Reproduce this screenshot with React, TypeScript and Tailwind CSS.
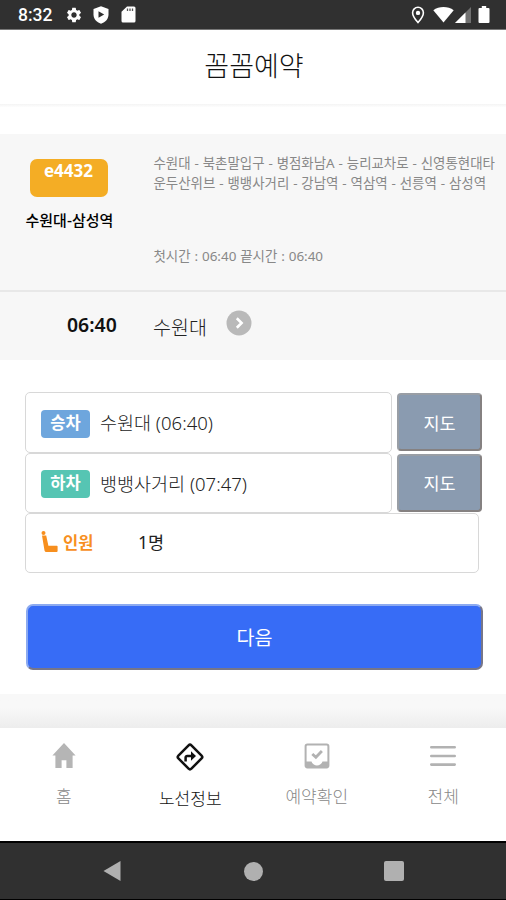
import type { ReactNode } from 'react'
import clsx from 'clsx'
import { MdSettings } from 'react-icons/md'

const stops = [
  { label: '승차', name: '수원대 (06:40)', color: 'bg-[#6ea6dd]' },
  { label: '하차', name: '뱅뱅사거리 (07:47)', color: 'bg-[#56c5b3]' },
]

const tabs = [
  { label: '홈', icon: <HomeIcon />, active: false },
  { label: '노선정보', icon: <RouteIcon />, active: true },
  { label: '예약확인', icon: <InboxIcon />, active: false },
  { label: '전체', icon: <MenuIcon />, active: false },
]

function HomeIcon() {
  return (
    <svg width="24" height="25" viewBox="0 0 24 24" preserveAspectRatio="none" fill="#b5b5b5">
      <path d="M12 0 23.6 12h-3V24h-6.200v-7.500H9.600V24H3.400V12H.4z" />
    </svg>
  )
}

function RouteIcon() {
  return (
    <svg width="30" height="30" viewBox="0 0 30 30" fill="none" stroke="#111" strokeWidth="2.5">
      <rect x="5.8" y="5.8" width="18.4" height="18.4" rx="2" transform="rotate(45 15 15)" />
      <path d="M10.600 19.500v-4a1.600 1.600 0 0 1 1.600-1.600h4.500" />
      <path d="M16 9.200 21 14l-5 4.800z" fill="#111" stroke="none" />
    </svg>
  )
}

function InboxIcon() {
  return (
    <svg width="26" height="26" viewBox="0 0 26 26" fill="none" stroke="#b2b2b2" strokeWidth="2">
      <rect x="1.600" y="1.600" width="22.800" height="22.800" rx="1.800" />
      <path d="M2 18.500h5.500c1 2.600 3 4 5.500 4s4.500-1.400 5.500-4H24V24H2z" fill="#b2b2b2" stroke="none" />
      <path d="m8.300 10.900 3.600 3.400 6-6.300" strokeWidth="2.800" />
    </svg>
  )
}

function MenuIcon() {
  return (
    <svg width="26" height="22" viewBox="0 0 26 22" stroke="#b2b2b2" strokeWidth="2.600" strokeLinecap="round">
      <path d="M1.300 2.300h23.400M1.300 11h23.400M1.300 19.600h23.400" />
    </svg>
  )
}

function StatusBar() {
  return (
    <div className="flex h-[30px] items-center justify-between border-b border-[#777] bg-[#303030] pr-[15px] pl-[18px] text-white">
      <div className="flex items-center">
        <span className="w-[47px] pt-[2px] text-[17.500px] leading-none font-medium">8:32</span>
        <MdSettings className="h-[18px] w-[18px]" />
        <svg className="ml-[10px]" width="16" height="18" viewBox="0 0 16 18">
          <path d="M8 .3 15.500 3v5.500c0 4.300-3 7.800-7.500 9.200C3.500 16.300.5 12.800.5 8.500V3z" fill="#fff" />
          <path d="M5.500 5.200v6.600L11.200 8.500z" fill="#303030" />
        </svg>
        <svg className="ml-[12px]" width="15" height="17" viewBox="0 0 15 17">
          <path d="M6 .5h7A1.500 1.500 0 0 1 14.500 2v13a1.500 1.500 0 0 1-1.500 1.500H2A1.500 1.500 0 0 1 .5 15V5.800z" fill="#fff" />
          <path d="M6.500 2.500v2.500M9 2.500v2.500M11.500 2.500v2.500" stroke="#555" strokeWidth="1.300" />
        </svg>
      </div>
      <div className="flex items-center">
        <svg width="14" height="18" viewBox="0 0 14 18">
          <path d="M7 1.300a5.400 5.400 0 0 0-5.400 5.400C1.600 10.600 7 16.500 7 16.500s5.400-5.900 5.400-9.800A5.400 5.400 0 0 0 7 1.300z" fill="none" stroke="#fff" strokeWidth="1.600" />
          <circle cx="7" cy="6.900" r="2.200" fill="#fff" />
        </svg>
        <svg className="ml-[8px]" width="21" height="16" viewBox="0 0 21 16">
          <path d="M10.500 15.500.3 3.300C6-1 15-1 20.700 3.300z" fill="#fff" />
        </svg>
        <svg className="ml-px" width="17" height="16" viewBox="0 0 17 16">
          <path d="M16 0v16H0z" fill="#707070" />
          <path d="M10.500 5.500V16H0z" fill="#fff" />
        </svg>
        <svg className="ml-[6px] mr-px" width="12" height="17" viewBox="0 0 12 17">
          <path d="M3.800 0h4.400v2h2.300a1 1 0 0 1 1 1v13a1 1 0 0 1-1 1h-9a1 1 0 0 1-1-1V3a1 1 0 0 1 1-1h2.300z" fill="#fff" />
        </svg>
      </div>
    </div>
  )
}

function Field({ className, children }: { className?: string; children: ReactNode }) {
  return (
    <div className={clsx('flex shrink-0 items-center rounded-[5px] border border-[#d8d8d8] bg-white pl-[15px]', className)}>
      {children}
    </div>
  )
}

export default function App() {
  return (
    <div className="flex h-[900px] w-[506px] flex-col overflow-hidden bg-white font-['Roboto','Noto_Sans_CJK_KR',sans-serif] text-[#222]">
      <StatusBar />

      <header className="flex h-[74px] items-center justify-center pl-[2px] text-[27px] font-light text-[#111]">
        꼼꼼예약
      </header>
      <div className="h-[30px] bg-gradient-to-b from-[#f4f4f4] to-white to-[12%]" />

      <section className="bg-[#f7f7f7]">
        <div className="flex h-[158px] border-b-2 border-[#e8e8e8] pt-[25px]">
          <div className="w-[153.500px] pl-[25.500px]">
            <div className="ml-[4px] flex h-[38px] w-[78px] justify-center rounded-[7px] bg-[#f4ad25] font-['Noto_Sans',sans-serif] text-[17px] leading-[23px] font-bold text-white">
              e4432
            </div>
            <div className="mt-[13px] text-[15px] leading-[22px] font-medium whitespace-nowrap text-black">수원대-삼성역</div>
          </div>
          <div className="font-['Noto_Sans','Noto_Sans_CJK_KR',sans-serif] text-[13.450px] leading-[20px] [word-spacing:0.4px] whitespace-nowrap text-[#888]">
            <p className="-mt-[6px]">수원대 - 북촌말입구 - 병점화남A - 능리교차로 - 신영통현대타</p>
            <p>운두산위브 - 뱅뱅사거리 - 강남역 - 역삼역 - 선릉역 - 삼성역</p>
            <p className="mt-[53px]">첫시간 : 06:40 끝시간 : 06:40</p>
          </div>
        </div>
        <div className="flex h-[68px] pl-[67px]">
          <span className="w-[86px] pt-[20px] font-['Noto_Sans',sans-serif] text-[19.400px] leading-[26px] font-semibold text-[#111]">06:40</span>
          <span className="w-[73px] pt-[24px] text-[19.500px] leading-[26px] font-light">수원대</span>
          <svg className="mt-[18px]" width="26" height="26" viewBox="0 0 26 26">
            <circle cx="13" cy="13" r="12.500" fill="#b9b9b9" />
            <path d="m10.800 8.300 4.800 4.700-4.800 4.700" fill="none" stroke="#fff" strokeWidth="2.600" />
          </svg>
        </div>
      </section>

      <main className="h-[334px] px-[25px] pt-[32px]">
        {stops.map((stop) => (
          <div key={stop.label} className="flex h-[60.500px] gap-[5px]">
            <Field className="h-[60.500px] w-[367px]">
              <span className={clsx('mt-[3px] flex h-[28px] w-[49px] items-center justify-center rounded-[4px] pt-px text-[16.500px] font-bold text-white', stop.color)}>
                {stop.label}
              </span>
              <span className="ml-[10px] mt-[2px] font-['Noto_Sans','Noto_Sans_CJK_KR',sans-serif] text-[18.500px] font-light whitespace-nowrap">
                {stop.name}
              </span>
            </Field>
            <button className="mt-px h-[58px] w-[85px] shrink-0 rounded-[4px] border-2 border-t-[#999ea5] border-r-[#858181] border-b-[#858181] border-l-[#999ea5] bg-[#8a9bb0] pt-[4px] text-[17.500px] text-white">
              지도
            </button>
          </div>
        ))}
        <Field className="h-[60px] w-[454px]">
          <svg className="-mt-[3px]" width="17" height="22" viewBox="0 0 17 22" fill="#f78f1e">
            <circle cx="2.500" cy="2" r="2" />
            <path d="M1 4.600h4.200l2.200 10.200h8.400a.8.8 0 0 1 .8.800v4.400a1 1 0 0 1-1 1H5.500a2 2 0 0 1-2-1.600z" />
          </svg>
          <span className="ml-[5px] w-[75px] pt-[3px] text-[16.500px] font-bold text-[#f78f1e]">인원</span>
          <span className="pb-[2px] font-['Noto_Sans','Noto_Sans_CJK_KR',sans-serif] text-[17.500px]">1명</span>
        </Field>
        <button className="mt-[31px] ml-px h-[66px] w-[457px] rounded-[7px] border-2 border-t-[#8caaf0] border-r-[#777688] border-b-[#777688] border-l-[#8caaf0] bg-[#376cf6] pt-[4px] text-[19.500px] text-white">
          다음
        </button>
      </main>

      <div className="h-[34px] bg-gradient-to-b from-[#f8f8f8] from-40% to-[#ededed]" />
      <nav className="flex h-[113px]">
        {tabs.map((tab) => (
          <div
            key={tab.label}
            className={clsx(
              'flex flex-1 flex-col items-center pl-px text-[17px] leading-[24px] font-light',
              tab.active ? 'text-[#111]' : 'text-[#888]',
            )}
          >
            <span className={clsx('flex items-center', tab.active ? 'h-[59px] pb-[2px]' : 'h-[57px] pb-[2px]')}>{tab.icon}</span>
            {tab.label}
          </div>
        ))}
      </nav>

      <footer className="flex h-[59px] items-center border-t-2 border-b border-t-black border-b-black bg-[#303030]">
        <svg className="ml-[102px]" width="20" height="22" viewBox="0 0 20 22">
          <path d="M1.500 11 18.500 1v20z" fill="#b0b0b0" />
        </svg>
        <div className="ml-[122px] h-[19px] w-[19px] rounded-full bg-[#b0b0b0]" />
        <div className="ml-[121px] h-[20px] w-[20px] rounded-[2px] bg-[#b0b0b0]" />
      </footer>
    </div>
  )
}
